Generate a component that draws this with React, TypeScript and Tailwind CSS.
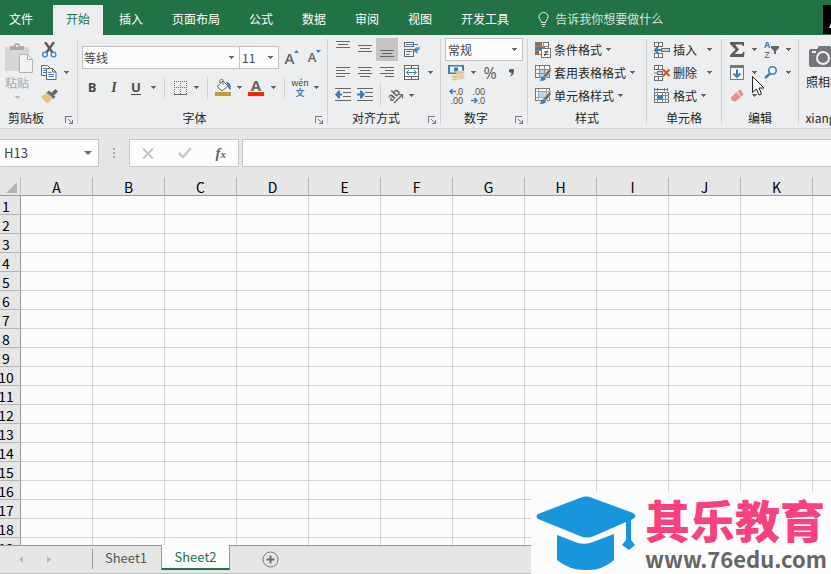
import { useEffect, useState } from "react";
import type { ReactNode } from "react";

const FONT = "font-['Noto_Sans_CJK_SC','Noto_Sans',sans-serif]";

function Tri({ color = "#666666" }: { color?: string }) {
  return (
    <svg width="5" height="3" viewBox="0 0 5 3" aria-hidden="true" className="shrink-0" shapeRendering="crispEdges">
      <path d="M0 0h5v1H4v1H3v1H2V2H1V1H0z" fill={color} />
    </svg>
  );
}

function Caret({ label }: { label: string }) {
  return (
    <button type="button" aria-label={label} className="flex h-[23px] w-3 shrink-0 items-center justify-center">
      <Tri />
    </button>
  );
}

function IconButton({ label, className = "w-[22px]", children }: { label: string; className?: string; children: ReactNode }) {
  return (
    <button type="button" aria-label={label} className={`flex h-[23px] shrink-0 items-center justify-center ${className}`}>
      {children}
    </button>
  );
}

function Divider({ className = "mx-[5px]" }: { className?: string }) {
  return <span className={`h-[22px] w-px shrink-0 bg-[#d2d2d2] ${className}`} />;
}

function Group({ label, className, labelClass = "", launcher = false, children }: { label: string; className: string; labelClass?: string; launcher?: boolean; children: ReactNode }) {
  return (
    <section aria-label={label} className={`flex shrink-0 flex-col ${className}`}>
      <div className="h-[69px]">{children}</div>
      <div className="flex h-[21px] items-center">
        <span className={`flex-1 text-center whitespace-nowrap ${labelClass}`}>{label}</span>
        {launcher && (
          <button type="button" aria-label={`${label}设置`} className="flex w-4 justify-center pt-1">
            <svg width="8" height="8" viewBox="0 0 8 8" fill="none" stroke="#777783" shapeRendering="crispEdges">
              <path d="M0.5 7V0.5H7" />
              <path d="M3 3l4 4M7.5 3.5v4h-4" />
            </svg>
          </button>
        )}
      </div>
    </section>
  );
}

function GroupLine() {
  return <span className="mt-px h-[85px] w-px shrink-0 bg-[#d2d2d2]" />;
}

function Lines({ rows }: { rows: [number, number, number][] }) {
  return (
    <svg width="14" height="19" viewBox="0 0 14 19" stroke="#666666" shapeRendering="crispEdges">
      {rows.map(([x1, x2, y]) => (
        <path key={y} d={`M${x1} ${y + 0.5}H${x2}`} />
      ))}
    </svg>
  );
}

function Indent({ right = false }: { right?: boolean }) {
  return (
    <svg width="16" height="15" viewBox="0 0 16 15" fill="none">
      <path d="M0 .5h16M8 4.5h8M8 8.5h8M0 12.5h16" stroke="#666" shapeRendering="crispEdges" />
      {right ? (
        <path d="M0 5.5h3v-3h1.5L8 6.5l-3.5 4H3v-3H0z" fill="#3f7db8" />
      ) : (
        <path d="M7 5.5H5v-3H3.5L0 6.5l3.5 4H5v-3h2z" fill="#3f7db8" />
      )}
    </svg>
  );
}

function TableBrush({ fill }: { fill: "grid" | "cell" }) {
  return (
    <svg width="16" height="16" viewBox="0 0 16 16" fill="none">
      <path d="M.5.5h14v12H.5z" fill="#fafafa" stroke="#777" shapeRendering="crispEdges" />
      {fill === "grid" ? (
        <>
          <path d="M5 4h9v8H5z" fill="#bcd3e8" />
          <path d="M.5 4.5h14M.5 8.5h14M4.5.5v12M9.5.5v12" stroke="#8a8a8a" shapeRendering="crispEdges" />
        </>
      ) : (
        <>
          <path d="M4 4h7v5H4z" fill="#bcd3e8" />
          <path d="M.5 3.5h14M.5 9.5h14M3.5.5v12M11.5.5v12" stroke="#a5a5a5" shapeRendering="crispEdges" />
        </>
      )}
      <path d="M15.8 2v4.5l-5 6.5-2.5-2.5z" fill="#6a6a6a" stroke="#eee" strokeWidth=".6" />
      <path d="M4 15.5c2 0 1.5-2.5 3-4 1.5-1 4.5 1 3.5 3-1 1.5-4 1.5-6.5 1z" fill="#3f7db8" />
    </svg>
  );
}

const rowBtn = "flex h-[23px] items-center whitespace-nowrap";

function ConditionalIcon() {
  return (
    <svg width="16" height="16" viewBox="0 0 16 16" fill="none" shapeRendering="crispEdges">
      <path d="M.5.5h13v12H.5z" fill="#fafafa" stroke="#777" />
      <path d="M1 1h6v3H1zM1 9h3v3H1z" fill="#c4571c" />
      <path d="M1 5h9v3H1z" fill="#3f7db8" />
      <path d="M8.5 0v6M0 4.5h13M0 8.5h6" stroke="#8a8a8a" />
      <path d="M6.5 6.5h9v9h-9z" fill="#fff" stroke="#777" />
      <path d="M9 10h4.5M9 12.5h4.5M12.5 8.5l-3 5.5" stroke="#444" shapeRendering="auto" />
    </svg>
  );
}

function CellsIcon({ kind }: { kind: "insert" | "delete" | "format" }) {
  if (kind === "format") {
    return (
      <svg width="16" height="16" viewBox="0 0 16 16" fill="none" shapeRendering="crispEdges">
        <path d="M.5 0v3M13.5 0v3M1 1.5h12M3.5 0v3M10.5 0v3" stroke="#3f7db8" />
        <path d="M.5 4.5h14v10H.5z" fill="#fafafa" stroke="#6e6e6e" />
        <path d="M.5 7.5h14M.5 11.5h14M3.5 4v11M8.5 4v11M11.5 4v11" stroke="#8a8a8a" />
        <path d="M4 7h5v4H4z" fill="#3f7db8" />
      </svg>
    );
  }
  return (
    <svg width="16" height="16" viewBox="0 0 16 16" fill="none">
      <path d="M.5.5h8v4h-8zM4.5.5v4M.5 11.5h8v4h-8zM4.5 11v4" stroke="#6e6e6e" fill="#fafafa" shapeRendering="crispEdges" />
      {kind === "insert" ? (
        <>
          <path d="M7.5 6.5h8v3h-8z" fill="#bcd3e8" stroke="#6e6e6e" shapeRendering="crispEdges" />
          <path d="M1 8h6M4 5L1 8l3 3" stroke="#3f7db8" strokeWidth="2" />
        </>
      ) : (
        <>
          <path d="M3.5 6.5h5v3h-5z" fill="#bcd3e8" stroke="#6e6e6e" shapeRendering="crispEdges" />
          <path d="M0 8h3" stroke="#6e6e6e" />
          <path d="M9 4.5l6.5 6.5M15.5 4.5L9 11" stroke="#d2541b" strokeWidth="2" />
        </>
      )}
    </svg>
  );
}

function ClipboardGroup() {
  return (
    <Group label="剪贴板" className="w-[77px]" labelClass="pr-[9px]" launcher>
      <div className="flex">
        <button type="button" className="mr-1 flex h-[69px] w-[34px] flex-col items-center pt-[5px] text-[#a8a8a8]">
          <svg width="28" height="31" viewBox="0 0 28 31" fill="none" className="ml-1">
            <path d="M0 4h24v24H0z" fill="#d6d6d6" />
            <path d="M5 3h4c0-4 6-4 6 0h4v4H5z" fill="#a9a9a9" />
            <path d="M11 2h2v2h-2z" fill="#eceeef" />
            <path d="M14.5 11.5h8l5 5v13h-13z" fill="#f1f3f5" stroke="#adb2b7" />
            <path d="M22.5 11.5v5h5" stroke="#adb2b7" />
          </svg>
          <span className="h-[18px] leading-[18px]">粘贴</span>
          <span className="pt-1"><Tri color="#bdbdbd" /></span>
        </button>
        <div className="flex flex-col">
          <IconButton label="剪切">
            <svg width="15" height="16" viewBox="0 0 15 16" fill="none">
              <path d="M3 0l7.5 10.5M12 0L4.5 10.5" stroke="#5c5c5c" strokeWidth="2.4" />
              <circle cx="3" cy="12.5" r="2.4" stroke="#3f7db8" strokeWidth="1.3" fill="#f4f7fa" />
              <circle cx="11.5" cy="12.5" r="2.4" stroke="#3f7db8" strokeWidth="1.3" fill="#f4f7fa" />
            </svg>
          </IconButton>
          <div className="flex">
            <IconButton label="复制">
              <svg width="16" height="15" viewBox="0 0 16 15" fill="none">
                <path d="M.5.5h6l3 3v7h-9z" fill="#fafafa" stroke="#666" />
                <path d="M2 3.5h3M2 5.5h3M2 7.5h3" stroke="#3f7db8" />
                <path d="M5.5 3.5h6l3.5 3.5v7.5H5.5z" fill="#fafafa" stroke="#666" />
                <path d="M11.5 3.5V7H15" stroke="#666" />
                <path d="M7.5 7.5h3M7.5 9.5h5.5M7.5 11.5h5.5" stroke="#3f7db8" />
              </svg>
            </IconButton>
            <Caret label="复制选项" />
          </div>
          <IconButton label="格式刷">
            <svg width="17" height="14" viewBox="0 0 17 14">
              <path d="M0 7.5l5-3 6 5.5-4 4c-2 0-5-3.5-7-6.5z" fill="#e8c27c" />
              <path d="M5 4l3-2.5 6.5 6.5-2.5 2z" fill="#666" />
              <path d="M10 4l4.5-4L17 2.5 13 6.5z" fill="#666" />
              <path d="M6 3.5l6 6" stroke="#f0f0f0" strokeWidth=".8" />
            </svg>
          </IconButton>
        </div>
      </div>
    </Group>
  );
}

function FontGroup() {
  return (
    <Group label="字体" className="w-[249px]" launcher>
      <div className="flex pt-2 pl-1">
        <label className="flex h-[23px] w-[158px] items-center border border-[#c3c3c3] bg-[#fcfcfc] pr-[5px]">
          <select aria-label="字体" className="min-w-0 flex-1 appearance-none bg-transparent pl-px text-[#444] outline-none">
            <option>等线</option>
          </select>
          <Tri />
        </label>
        <label className="-ml-px flex h-[23px] w-10 items-center border border-[#c3c3c3] bg-[#fcfcfc] pr-[5px]">
          <select aria-label="字号" className="min-w-0 flex-1 appearance-none bg-transparent pl-[2px] text-[#444] outline-none">
            <option>11</option>
          </select>
          <Tri />
        </label>
        <IconButton label="增大字号" className="ml-[2px] w-[22px]">
          <span className="font-['Open_Sans',sans-serif] text-[15px] font-semibold text-[#666]">A</span>
          <svg width="5" height="15" viewBox="0 0 5 15"><path d="M0 3h5L2.5 0z" fill="#3f7db8" /></svg>
        </IconButton>
        <IconButton label="减小字号" className="w-[23px]">
          <span className="pt-px font-['Open_Sans',sans-serif] text-[13px] font-semibold text-[#666]">A</span>
          <svg width="5" height="15" viewBox="0 0 5 15"><path d="M0 0h5L2.5 3z" fill="#3f7db8" /></svg>
        </IconButton>
      </div>
      <div className="flex items-center pt-[7px] pl-[3px] font-['Open_Sans',sans-serif] text-[13px] text-[#4a4a4a]">
        <IconButton label="加粗"><b>B</b></IconButton>
        <IconButton label="倾斜"><i className="font-['Liberation_Serif',serif] text-sm font-bold">I</i></IconButton>
        <IconButton label="下划线"><b className="h-[15px] border-b border-[#4a4a4a] leading-[14px]">U</b></IconButton>
        <Caret label="下划线选项" />
        <Divider />
        <IconButton label="边框" className="w-5">
          <svg width="13" height="14" viewBox="0 0 13 14" stroke="#666" shapeRendering="crispEdges">
            <path d="M0 .5h13M0 6.5h13M.5 0v13M6.5 0v13M12.5 0v13" strokeDasharray="1 1" />
            <path d="M0 13.5h13" />
          </svg>
        </IconButton>
        <Caret label="边框选项" />
        <Divider />
        <IconButton label="填充颜色" className="w-5">
          <svg width="16" height="17" viewBox="0 0 16 17" fill="none">
            <path d="M11 3c4 0 5.5 3 4.5 8-1.5-1-2.5-2-2.5-4z" fill="#3f7db8" />
            <path d="M2 7.5l6-5.5 5 5-6 5z" fill="#fafafa" stroke="#666" />
            <path d="M5 4V1.5c0-1.5 3-1.5 3 0V6" stroke="#666" />
            <path d="M0 13h16v4H0z" fill="#bf9a3c" />
          </svg>
        </IconButton>
        <Caret label="填充颜色选项" />
        <IconButton label="字体颜色">
          <span className="flex h-[17px] w-4 items-end justify-center border-b-4 border-[#f62400] text-[15px] leading-[14px] font-bold text-[#666]">A</span>
        </IconButton>
        <Caret label="字体颜色选项" />
        <Divider />
        <IconButton label="拼音指南" className={`w-5 ${FONT}`}>
          <span className="flex flex-col items-center text-[9px] leading-[10px] text-[#444]">
            <span>wén</span>
            <span className="font-bold text-[#3f7db8]">文</span>
          </span>
        </IconButton>
        <Caret label="拼音选项" />
      </div>
    </Group>
  );
}

function AlignGroup() {
  return (
    <Group label="对齐方式" className="w-28" launcher>
      <div className="flex pl-1">
        <IconButton label="顶端对齐"><Lines rows={[[0, 14, 1], [2, 12, 4], [0, 14, 7]]} /></IconButton>
        <IconButton label="垂直居中"><Lines rows={[[0, 14, 5], [2, 12, 8], [0, 14, 11]]} /></IconButton>
        <IconButton label="底端对齐" className="w-[22px] bg-[#c5c5c5]"><Lines rows={[[0, 14, 10], [2, 12, 13], [0, 14, 16]]} /></IconButton>
        <IconButton label="自动换行" className="w-[28px]">
          <svg width="16" height="16" viewBox="0 0 16 16" fill="none">
            <path d="M.5.5h9v4h-9zM.5 7.5h9v7h-9z" stroke="#666" fill="#fafafa" shapeRendering="crispEdges" />
            <path d="M2 2.5h12M2 9.5h6M2 12.5h4" stroke="#3f7db8" shapeRendering="crispEdges" />
            <path d="M15 5c0 2-1 3.5-4 3.5M13 5.5L10.5 8.5l3 2.5" stroke="#3f7db8" strokeWidth="1.5" />
          </svg>
        </IconButton>
      </div>
      <div className="flex pl-1">
        <IconButton label="左对齐"><Lines rows={[[0, 14, 4], [0, 9, 7], [0, 14, 10], [0, 9, 13]]} /></IconButton>
        <IconButton label="居中"><Lines rows={[[0, 14, 4], [2, 12, 7], [0, 14, 10], [2, 12, 13]]} /></IconButton>
        <IconButton label="右对齐"><Lines rows={[[0, 14, 4], [5, 14, 7], [0, 14, 10], [5, 14, 13]]} /></IconButton>
        <IconButton label="合并后居中" className="w-[26px]">
          <svg width="15" height="15" viewBox="0 0 15 15" fill="none">
            <path d="M.5.5h14v14H.5zM.5 3.5h14M.5 11.5h14M7.5.5v3M7.5 11.5v3" stroke="#666" fill="#fafafa" shapeRendering="crispEdges" />
            <path d="M3 7.5h9M5 5L2.5 7.5 5 10M10 5l2.5 2.5L10 10" stroke="#3f7db8" />
          </svg>
        </IconButton>
        <Caret label="合并选项" />
      </div>
      <div className="flex pl-1">
        <IconButton label="减少缩进量"><Indent /></IconButton>
        <IconButton label="增加缩进量"><Indent right /></IconButton>
        <Divider className="mx-1" />
        <IconButton label="方向" className="w-5">
          <svg width="18" height="18" viewBox="0 0 18 18" fill="none" overflow="visible">
            <text x="-6" y="4" transform="translate(7 8) rotate(-45)" fill="#555" fontFamily="Open Sans, sans-serif" fontSize="11" fontWeight="600">ab</text>
            <path d="M8 16l8-8M12.5 7.5H16.5V11.5" stroke="#666" strokeWidth="1.2" />
          </svg>
        </IconButton>
        <Caret label="方向选项" />
      </div>
    </Group>
  );
}

function NumberGroup() {
  return (
    <Group label="数字" className="w-[86px]" launcher>
      <div className="px-1">
        <label className="flex h-[23px] items-center border border-[#c3c3c3] bg-[#fcfcfc] pr-[5px]">
          <select aria-label="数字格式" className="min-w-0 flex-1 appearance-none bg-transparent pl-[2px] text-[#444] outline-none">
            <option>常规</option>
          </select>
          <Tri />
        </label>
      </div>
      <div className="flex pl-1 text-[#5a5a5a]">
        <IconButton label="会计数字格式">
          <svg width="17" height="16" viewBox="0 0 17 16" fill="none">
            <path d="M0 0h16v9H0z" fill="#3f7db8" />
            <path d="M2 1.5h12v6H2z" fill="#f4f6f8" />
            <path d="M0 0h4L0 4zM16 0v4l-4-4zM0 9V6l3 3z" fill="#3f7db8" />
            <circle cx="8" cy="4.5" r="2.3" fill="#3f7db8" />
            <g fill="#eac58a" stroke="#eceeef" strokeWidth=".6">
              <ellipse cx="12.5" cy="12.5" rx="4" ry="2" />
              <ellipse cx="12.5" cy="10" rx="4" ry="2" />
              <ellipse cx="12.5" cy="7.5" rx="4" ry="2" />
              <ellipse cx="7" cy="14" rx="3.5" ry="1.8" />
              <ellipse cx="7" cy="11.5" rx="3.5" ry="1.8" />
            </g>
          </svg>
        </IconButton>
        <Caret label="会计数字格式选项" />
        <IconButton label="百分比样式"><span className="font-['Open_Sans',sans-serif] text-base">%</span></IconButton>
        <IconButton label="千位分隔样式">
          <svg width="6" height="8" viewBox="0 0 6 8"><path d="M1 0h3.5L5 2C5 5 3.5 7 1 7.5c1-1.500 1.500-2 1.500-3.500L0 3V1z" fill="#5a5a5a" /></svg>
        </IconButton>
      </div>
      <div className="flex pl-1 font-['Open_Sans',sans-serif] text-[9px] leading-[9px] text-[#444]">
        <IconButton label="增加小数位数">
          <span className="flex flex-col items-end">
            <span className="flex items-center">
              <svg width="7" height="7" viewBox="0 0 7 7" fill="none"><path d="M1 3.5h6M3.5 1L1 3.5 3.5 6" stroke="#3f7db8" strokeWidth="1.5" /></svg>.0
            </span>
            <span>.00</span>
          </span>
        </IconButton>
        <IconButton label="减少小数位数">
          <span className="flex flex-col items-end">
            <span>.00</span>
            <span className="flex items-center">
              <svg width="7" height="7" viewBox="0 0 7 7" fill="none"><path d="M0 3.5h6M3.5 1L6 3.5 3.5 6" stroke="#3f7db8" strokeWidth="1.5" /></svg>.0
            </span>
          </span>
        </IconButton>
      </div>
    </Group>
  );
}

function StylesGroup() {
  return (
    <Group label="样式" className="w-[118px]">
      <div className="flex flex-col items-start pl-[7px]">
        <button type="button" className={rowBtn}><ConditionalIcon /><span className="pr-1 pl-[3px]">条件格式</span><Tri /></button>
        <button type="button" className={rowBtn}><TableBrush fill="grid" /><span className="pr-1 pl-[3px]">套用表格格式</span><Tri /></button>
        <button type="button" className={rowBtn}><TableBrush fill="cell" /><span className="pr-1 pl-[3px]">单元格样式</span><Tri /></button>
      </div>
    </Group>
  );
}

function CellsGroup() {
  return (
    <Group label="单元格" className="w-[74px]">
      <div className="flex flex-col items-start pl-[7px]">
        <button type="button" className={rowBtn}><CellsIcon kind="insert" /><span className="pr-[10px] pl-[3px]">插入</span><Tri /></button>
        <button type="button" className={rowBtn}><CellsIcon kind="delete" /><span className="pr-[10px] pl-[3px]">删除</span><Tri /></button>
        <button type="button" className={rowBtn}><CellsIcon kind="format" /><span className="pr-1 pl-[3px]">格式</span><Tri /></button>
      </div>
    </Group>
  );
}

function EditGroup() {
  return (
    <Group label="编辑" className="w-[76px]">
      <div className="flex pl-1">
        <IconButton label="自动求和">
          <svg width="15" height="15" viewBox="0 0 15 15">
            <path d="M0 0h14v4h-1.5c0-1-.5-1.5-1.5-1.5H5l4 5-4.5 4.5H11c1.2 0 1.7-.5 2-2h1.5L14 15H0v-2l5.5-5.5L0 2z" fill="#5a5a5a" />
          </svg>
        </IconButton>
        <Caret label="求和选项" />
        <IconButton label="排序和筛选">
          <span className="flex w-[7px] flex-col font-['Open_Sans',sans-serif] text-[9px] leading-[10px] font-bold text-[#3f7db8]">
            <span>A</span>
            <span className="font-semibold text-[#6b6470]">Z</span>
          </span>
          <svg width="8" height="8" viewBox="0 0 8 8"><path d="M0 0h8v2L5 5v3H3V5L0 2z" fill="#666" /></svg>
        </IconButton>
        <Caret label="排序选项" />
      </div>
      <div className="flex pl-1">
        <IconButton label="填充">
          <svg width="14" height="15" viewBox="0 0 14 15" fill="none">
            <path d="M.5.5h13v14H.5z" fill="#fafafa" stroke="#777" />
            <path d="M0 0h14v3H0z" fill="#777" />
            <path d="M7 4.5v8M3.5 8.5L7 12l3.5-3.5" stroke="#3f7db8" strokeWidth="2" />
          </svg>
        </IconButton>
        <Caret label="填充选项" />
        <IconButton label="查找和选择">
          <svg width="14" height="13" viewBox="0 0 14 13" fill="none">
            <circle cx="8.5" cy="4.5" r="3.7" stroke="#3f7db8" strokeWidth="1.6" fill="#f5f8fa" />
            <path d="M6 7.5L1 12" stroke="#3f7db8" strokeWidth="2.4" />
          </svg>
        </IconButton>
        <Caret label="查找选项" />
      </div>
      <div className="flex pl-1">
        <IconButton label="清除">
          <svg width="14" height="14" viewBox="0 0 14 14">
            <path d="M7.5 2L10.5.5 13.5 5l-2.5 3z" fill="#e58e8e" />
            <path d="M6.5 3l4 5.5-5 4-4-1-.5-3z" fill="#e58e8e" />
          </svg>
        </IconButton>
        <Caret label="清除选项" />
      </div>
    </Group>
  );
}

function Ribbon() {
  return (
    <div className="relative flex h-[94px] shrink-0 overflow-hidden border-b border-[#d2d2d2] bg-[#eceeef] pt-[3px] text-xs text-[#262626]">
      <ClipboardGroup />
      <GroupLine />
      <FontGroup />
      <GroupLine />
      <AlignGroup />
      <GroupLine />
      <NumberGroup />
      <GroupLine />
      <StylesGroup />
      <GroupLine />
      <CellsGroup />
      <GroupLine />
      <EditGroup />
      <GroupLine />
      <Group label="xiangji" className="w-[50px]">
        <button type="button" className="flex w-full flex-col items-center pt-[7px]">
          <svg width="30" height="24" viewBox="0 0 30 24" fill="none">
            <path d="M2 4h6l2-3h11l2 3h5q2 0 2 2v14q0 2-2 2H2q-2 0-2-2V6q0-2 2-2z" fill="#76747d" />
            <circle cx="14" cy="13" r="6" fill="#76747d" stroke="#f2f2f2" strokeWidth="2" />
            <path d="M3 6h4v2H3z" fill="#eceeef" />
          </svg>
          <span className="pt-[5px]">照相机</span>
        </button>
      </Group>
      <svg className="absolute top-[41px] left-[752px]" width="13" height="20" viewBox="0 0 13 20" aria-hidden="true">
        <path d="M.5.5v16l4-3.5 2.5 6 2.5-1L7 12h5z" fill="#fff" stroke="#222" />
      </svg>
    </div>
  );
}

const TABS = ["开始", "插入", "页面布局", "公式", "数据", "审阅", "视图", "开发工具"];

function TitleTabs() {
  return (
    <header className="flex h-[35px] shrink-0 items-stretch overflow-hidden bg-[#217346] pl-[9px] text-xs whitespace-nowrap text-white">
      <button type="button" className="w-11 shrink-0 pt-[2px] text-left">文件</button>
      <nav className="flex shrink-0 gap-[3px] pt-[5px]">
        {TABS.map((t, i) => (
          <button key={t} type="button" className={i === 0 ? "bg-[#eceeef] px-[13px] pb-[3px] text-[#217346]" : "px-[13px] pb-[3px]"}>
            {t}
          </button>
        ))}
      </nav>
      <button type="button" className="ml-4 flex flex-1 items-center gap-[6px] pt-[3px] text-[#d5e5dc]">
        <svg width="11" height="15" viewBox="0 0 11 15" fill="none" stroke="#eef5f1">
          <path d="M3.5 10.5C3.5 8.5 1 7.5 1 4.8a4.5 4.3 0 0 1 9 0c0 2.7-2.5 3.7-2.5 5.7z" />
          <path d="M3.5 12.5h4M4.5 14.5h2" />
        </svg>
        告诉我你想要做什么
      </button>
      <svg className="mt-[5px] shrink-0" width="8" height="29" viewBox="0 0 8 29" aria-hidden="true">
        <path d="M0 0h8v29H0z" fill="#000" />
        <path d="M8 18v5H6z" fill="#ddd" />
      </svg>
    </header>
  );
}

function FormulaBar() {
  return (
    <div className="flex h-12 shrink-0 items-start bg-[#e6e6e6] pt-[10px]">
      <label className="flex h-7 w-[99px] items-center border border-l-0 border-[#c6c6c6] bg-[#fcfcfc] pr-[6px]">
        <input aria-label="名称框" defaultValue="H13" className="w-full min-w-0 flex-1 bg-transparent pl-1 text-[13px] text-[#444] outline-none" />
        <svg width="8" height="4" viewBox="0 0 8 4"><path d="M0 0h8L4 4z" fill="#6a6a6a" /></svg>
      </label>
      <svg className="mx-[14px] mt-[9px]" width="2" height="11" viewBox="0 0 2 11"><path d="M0 0h2v2H0zM0 4h2v2H0zM0 8h2v2H0z" fill="#a8a8a8" /></svg>
      <div className="flex h-7 w-[110px] items-center justify-around border border-[#c6c6c6] bg-[#fcfcfc]">
        <button type="button" aria-label="取消"><svg width="12" height="11" viewBox="0 0 12 11"><path d="M1 .5l10 10M11 .5l-10 10" stroke="#c4c4c4" strokeWidth="2" /></svg></button>
        <button type="button" aria-label="输入"><svg width="14" height="12" viewBox="0 0 14 12" fill="none"><path d="M1 6l4 4 8-9" stroke="#c6c8c8" strokeWidth="2.5" /></svg></button>
        <button type="button" aria-label="插入函数" className="font-['Liberation_Serif',serif] text-[15px] leading-4 font-bold text-[#666] italic">f<span className="text-[11px]">x</span></button>
      </div>
      <input aria-label="编辑栏" className="ml-[3px] h-7 min-w-0 flex-1 border border-r-0 border-[#c6c6c6] bg-[#fcfcfc] px-1 text-xs outline-none" />
    </div>
  );
}

const COL_WIDTH = 72;
const ROW_HEIGHT = 19;
const HEAD_WIDTH = 21;
const CHROME_HEIGHT = 225;

function visibleCells() {
  return {
    cols: Math.min(26, Math.ceil((window.innerWidth - HEAD_WIDTH) / COL_WIDTH)),
    rows: Math.ceil((window.innerHeight - CHROME_HEIGHT) / ROW_HEIGHT),
  };
}

function Grid() {
  const [size, setSize] = useState(visibleCells);
  useEffect(() => {
    const update = () => setSize(visibleCells());
    window.addEventListener("resize", update);
    return () => window.removeEventListener("resize", update);
  }, []);
  const columns = Array.from({ length: size.cols }, (_, i) => String.fromCharCode(65 + i));
  const rows = Array.from({ length: size.rows }, (_, i) => i + 1);

  return (
    <main className="min-h-0 flex-1 overflow-hidden bg-[#fcfcfc]">
      <table className="table-fixed border-separate border-spacing-0 text-black" style={{ width: HEAD_WIDTH + size.cols * COL_WIDTH }}>
        <thead>
          <tr className="h-[19px]">
            <th className="w-[21px] border-r border-b border-r-[#c0c0c0] border-b-[#999] bg-[#e6e6e6] p-0">
              <svg className="mt-[3px] ml-[6px]" width="11" height="11" viewBox="0 0 11 11"><path d="M11 0v11H0z" fill="#b4b4b4" /></svg>
            </th>
            {columns.map((c) => (
              <th key={c} scope="col" className="w-[72px] border-r border-b border-r-[#b5b5b5] border-b-[#999] bg-[#e6e6e6] p-0 pt-[2px] text-sm leading-4 font-normal">{c}</th>
            ))}
          </tr>
        </thead>
        <tbody>
          {rows.map((r) => (
            <tr key={r} className="h-[19px]">
              <th scope="row" className="border-r border-b border-r-[#999] border-b-[#b5b5b5] bg-[#e6e6e6] p-0 text-sm font-normal">
                <div className="-ml-[2px] flex w-4 justify-center pt-[2px] leading-4">{r}</div>
              </th>
              {columns.map((c) => (
                <td key={c} className="border-r border-b border-[#d4d4d4] p-0" />
              ))}
            </tr>
          ))}
        </tbody>
      </table>
    </main>
  );
}

function SheetBar() {
  return (
    <footer className="flex h-[29px] shrink-0 items-start border-b border-[#c0c0c0] bg-[#e6e6e6] text-[13px]">
      <div className="flex h-[28px] w-[92px] items-center gap-6 border-t border-[#999] pl-[19px]">
        <button type="button" aria-label="上一个工作表"><svg width="4" height="7" viewBox="0 0 4 7"><path d="M4 0v7L0 3.5z" fill="#b8b8b8" /></svg></button>
        <button type="button" aria-label="下一个工作表"><svg width="4" height="7" viewBox="0 0 4 7"><path d="M0 0v7l4-3.5z" fill="#b8b8b8" /></svg></button>
      </div>
      <div className="flex h-[28px] border-t border-[#999] pt-[3px]">
        <button type="button" className="h-5 w-[69px] border-l border-[#999] pr-[2px] pb-[3px] leading-[17px] text-[#555]">Sheet1</button>
      </div>
      <button type="button" className="h-[25px] w-[69px] border-x border-b-2 border-x-[#999] border-b-[#217346] bg-[#fcfcfc] leading-[23px] text-[#217346]">Sheet2</button>
      <div className="flex h-[28px] flex-1 items-center border-t border-[#999] pl-8">
        <button type="button" aria-label="新工作表">
          <svg width="17" height="17" viewBox="0 0 17 17" fill="none"><circle cx="8.5" cy="8.5" r="7.5" stroke="#777" /><path d="M8.5 4.5v8M4.5 8.5h8" stroke="#6b6b7b" strokeWidth="2" /></svg>
        </button>
      </div>
    </footer>
  );
}

function Brand() {
  return (
    <aside className="absolute right-0 bottom-0 flex h-[82px] w-[300px] bg-[#fcfcfc] pl-[5px]">
      <svg className="mt-1 shrink-0" width="100" height="75" viewBox="0 0 100 75" fill="#1796dc">
        <path d="M2 18L45 1.5q5-2 10 0L97 17q5 3 0 6l-2 1v20l4 5-6 5-7-5 4-5V26L58 40q-7 3-14 0L2 23q-3-2.5 0-5z" />
        <path d="M21 39l21 8q8 2 15-1l21-8v26q-12 11-29 10-16 0-28-10z" />
      </svg>
      <div className="flex flex-col pl-[9px] whitespace-nowrap">
        <span className="h-[52px] pt-[5px] text-[45px] leading-[46px] font-black text-[#f8417f]">其乐教育</span>
        <span className="text-[22px] leading-7 font-bold text-[#666]">www.76edu.com</span>
      </div>
    </aside>
  );
}

export default function App() {
  return (
    <div className={`relative flex h-screen flex-col overflow-hidden ${FONT}`}>
      <TitleTabs />
      <Ribbon />
      <FormulaBar />
      <Grid />
      <SheetBar />
      <Brand />
    </div>
  );
}
